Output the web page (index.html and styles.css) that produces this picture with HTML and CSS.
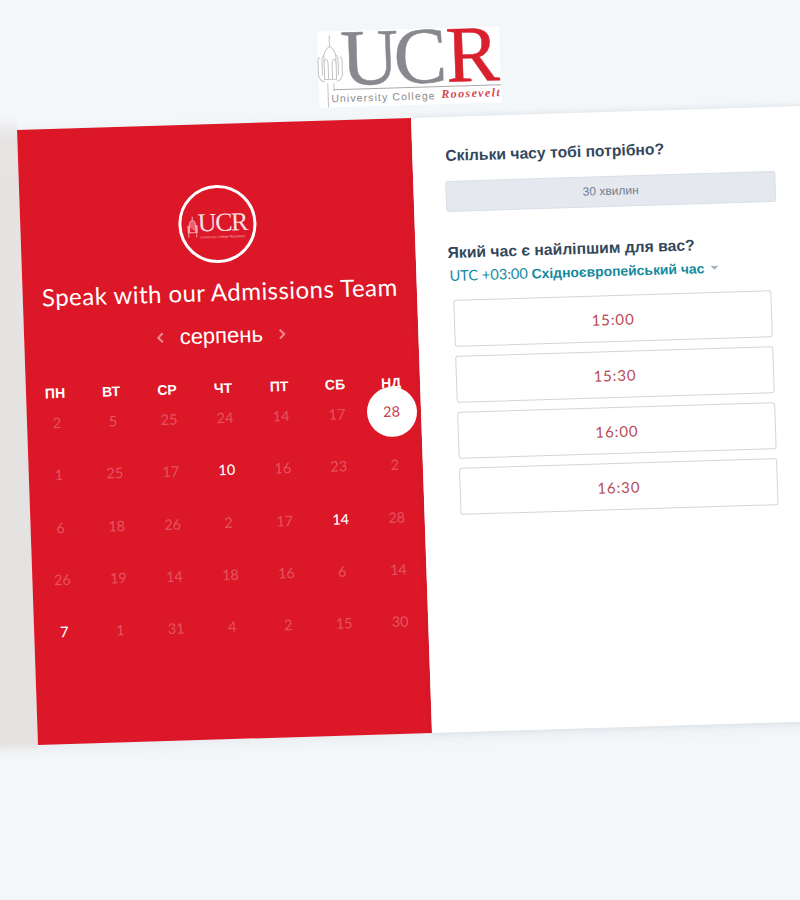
FILE: index.html
```html
<!DOCTYPE html>
<html lang="uk">
<head>
<meta charset="utf-8">
<title>Speak with our Admissions Team</title>
<link rel="stylesheet" href="styles.css">
</head>
<body>
<main class="page">
  <header class="brand">
    <svg class="brand-logo" viewBox="0 0 182 76" width="182" height="76" role="img" aria-label="University College Roosevelt">
      <rect width="182" height="76" fill="#fff"/>
      <path class="tower" d="M9 76V52M15 60V52M12 4V15M6 26C6 20 9 17 12 15C15 17 18 20 18 26V34M6 26V34M6 34C6 30 7 28 8 28C9 28 10 30 10 34V48M14 48V34C14 30 15 28 16 28C17 28 18 30 18 34M6 34V48H18V34M2 26C0 26 0 28 0 30V42C0 47 3 50 6 50M6 24C5 24 4 26 4 28V44M22 26C24 26 24 28 24 30V42C24 47 21 50 18 50M18 24C19 24 20 26 20 28V44"/>
      <path class="rule" d="M15 58.5H182"/>
      <text class="mark mark-grey" x="23" y="54">UC</text>
      <text class="mark mark-red" x="128" y="54">R</text>
      <text class="sub sub-grey" x="12" y="71">University College</text>
      <text class="sub sub-red" x="122" y="70">Roosevelt</text>
    </svg>
  </header>

  <section class="card-row">
    <div class="band"></div>

    <div class="panel-red">
      <div class="badge">
        <svg class="badge-tower" viewBox="0 0 10 22" width="10" height="22" aria-hidden="true">
          <path d="M5 1V5M2 9C2 6 4 5 5 5C6 5 8 6 8 9V17H2ZM0 10V17H10V10H9V17M1 10V17M1 17V22M9 17V22"/>
        </svg>
        <div class="badge-text">
          <span class="badge-mark">UCR</span>
          <span class="badge-sub">University College Roosevelt</span>
        </div>
      </div>
      <h1 class="title">Speak with our Admissions Team</h1>
      <div class="month">
        <svg class="chev" viewBox="0 0 8 12" width="8" height="12" aria-hidden="true"><path d="M6.5 1.5L2 6l4.5 4.5"/></svg>
        <span class="month-name">серпень</span>
        <svg class="chev" viewBox="0 0 8 12" width="8" height="12" aria-hidden="true"><path d="M1.5 1.5L6 6l-4.5 4.5"/></svg>
      </div>
      <div class="cal">
        <div class="dow">ПН</div><div class="dow">ВТ</div><div class="dow">СР</div><div class="dow">ЧТ</div><div class="dow">ПТ</div><div class="dow">СБ</div><div class="dow">НД</div>
        <div class="day">2</div><div class="day">5</div><div class="day">25</div><div class="day">24</div><div class="day">14</div><div class="day">17</div><div class="day"><span class="day-sel">28</span></div>
        <div class="day">1</div><div class="day">25</div><div class="day">17</div><div class="day day-on">10</div><div class="day">16</div><div class="day">23</div><div class="day">2</div>
        <div class="day">6</div><div class="day">18</div><div class="day">26</div><div class="day">2</div><div class="day">17</div><div class="day day-on">14</div><div class="day">28</div>
        <div class="day">26</div><div class="day">19</div><div class="day">14</div><div class="day">18</div><div class="day">16</div><div class="day">6</div><div class="day">14</div>
        <div class="day day-on">7</div><div class="day">1</div><div class="day">31</div><div class="day">4</div><div class="day">2</div><div class="day">15</div><div class="day">30</div>
      </div>
    </div>

    <div class="panel-white">
      <h2 class="q q-first">Скільки часу тобі потрібно?</h2>
      <div class="duration">30 хвилин</div>
      <h2 class="q q-second">Який час є найліпшим для вас?</h2>
      <div class="tz"><span>UTC +03:00</span> <b>Східноєвропейський час</b><i class="caret"></i></div>
      <div class="slots">
        <button class="slot" type="button">15:00</button>
        <button class="slot" type="button">15:30</button>
        <button class="slot" type="button">16:00</button>
        <button class="slot" type="button">16:30</button>
      </div>
    </div>
  </section>
</main>
</body>
</html>
```

FILE: styles.css
```css
html, body {
  margin: 0;
  height: 900px;
  overflow: hidden;
  background: #f4f7fa;
}

.page {
  width: 868px;
  transform-origin: 0 0;
  transform: matrix(1, -0.0305, 0.0341, 1, -27.4, 1.2);
  font-family: "Liberation Sans", Arial, sans-serif;
}

.brand {
  display: flex;
  justify-content: center;
  padding-top: 41px;
  padding-bottom: 13px;
}

.brand-logo { display: block; overflow: visible; }
.tower { fill: none; stroke: #c4c4c7; stroke-width: 1; }
.rule { fill: none; stroke: #a9a9ad; stroke-width: 1; }
.mark { font-family: "Liberation Serif", serif; font-size: 80px; }
.mark-grey { fill: #88898e; stroke: #88898e; stroke-width: 0.5px; letter-spacing: -5px; }
.mark-red { fill: #d9212e; stroke: #d9212e; stroke-width: 0.5px; }
.sub-grey { fill: #8a8b90; font-size: 10.5px; letter-spacing: 1.1px; }
.sub-red { fill: #cf4a56; font-family: "Liberation Serif", serif; font-style: italic; font-weight: 700; font-size: 12px; letter-spacing: 1.4px; }

.card-row {
  display: flex;
  height: 615px;
  box-shadow: 0 4px 14px rgba(60, 80, 100, 0.07);
}

.band {
  width: 40px;
  flex: none;
  margin: -14px 0 -6px;
  background: linear-gradient(#f4f7fa 0, #e6e3e3 24px, #e5e2e2 calc(100% - 8px), #f0f2f3 100%);
}

.panel-red {
  width: 394px;
  flex: none;
  box-sizing: border-box;
  padding-top: 61px;
  background: #dc1727;
  color: #fff;
  display: flex;
  flex-direction: column;
  align-items: center;
}

.badge {
  width: 78px;
  height: 78px;
  box-sizing: border-box;
  border: 3px solid #fff;
  border-radius: 50%;
  display: flex;
  align-items: center;
  justify-content: center;
}

.badge-tower { fill: #e8616c; stroke: #f2a9af; stroke-width: 1; margin-top: 4px; }
.badge-text { display: flex; flex-direction: column; align-items: center; margin-top: 3px; }
.badge-mark { font-family: "Liberation Serif", serif; font-size: 26px; line-height: 24px; letter-spacing: -1.4px; color: #f9dfe1; }
.badge-sub { font-size: 3.5px; line-height: 5px; white-space: nowrap; color: #f4b6bb; }

.title {
  margin: 13px 0 0;
  font-family: Lato, sans-serif;
  font-size: 24px;
  line-height: 32px;
  font-weight: 400;
  letter-spacing: 0.46px;
  white-space: nowrap;
}

.month {
  margin-top: 14px;
  height: 28px;
  width: 130px;
  display: flex;
  align-items: center;
  justify-content: space-between;
}

.month-name { font-size: 22px; line-height: 28px; }
.chev { fill: none; stroke: #ee8c95; stroke-width: 2; }

.cal {
  width: 392px;
  margin-top: 28px;
  display: grid;
  grid-template-columns: repeat(7, 56px);
  grid-auto-rows: 52.3px;
  grid-template-rows: 30px;
  text-align: center;
}

.dow {
  font-size: 14px;
  font-weight: 700;
  line-height: 20px;
  height: 20px;
}

.day {
  font-family: Lato, sans-serif;
  font-size: 14.5px;
  line-height: 18px;
  color: rgba(255, 255, 255, 0.27);
  margin-top: 1px;
  padding-left: 2px;
  display: flex;
  justify-content: center;
}

.day-on { color: #fff; font-weight: 500; }

.day-sel {
  width: 50px;
  height: 50px;
  flex: none;
  margin: -17.5px 0 0 -3px;
  border-radius: 50%;
  background: #fff;
  color: #c9414d;
  line-height: 50px;
}

.panel-white {
  width: 434px;
  flex: none;
  box-sizing: border-box;
  padding: 29px 0 0 33px;
  background: #fff;
  box-shadow: 0 0 6px rgba(50, 70, 90, 0.1);
}

.q {
  margin: 0;
  font-size: 15.7px;
  line-height: 20px;
  font-weight: 700;
  color: #33475b;
}

.q-second { margin-top: 31px; margin-left: -1px; }

.duration {
  width: 330px;
  height: 31px;
  box-sizing: border-box;
  margin: 15px 0 0 -1px;
  border: 1px solid #d8dfe8;
  border-radius: 3px;
  background: #e5e8ef;
  color: #6f7f90;
  font-size: 12px;
  line-height: 29px;
  text-align: center;
}

.tz {
  margin-top: 3px;
  font-family: Lato, sans-serif;
  font-size: 14.6px;
  line-height: 20px;
  color: #158a9e;
  white-space: nowrap;
}

.tz b { font-family: "Liberation Sans", sans-serif; font-size: 13.9px; }

.caret {
  display: inline-block;
  margin-left: 6px;
  vertical-align: 3px;
  border-left: 4px solid transparent;
  border-right: 4px solid transparent;
  border-top: 4px solid #a5b3c2;
}

.slots {
  margin: 14px 0 0 3px;
  display: flex;
  flex-direction: column;
  gap: 9px;
}

.slot {
  width: 318px;
  height: 47px;
  box-sizing: border-box;
  padding: 0;
  border: 1px solid #cfd6de;
  border-radius: 3px;
  background: #fff;
  color: #b94a55;
  font-family: Lato, sans-serif;
  font-size: 15px;
  letter-spacing: 0.9px;
  text-align: center;
}
```
